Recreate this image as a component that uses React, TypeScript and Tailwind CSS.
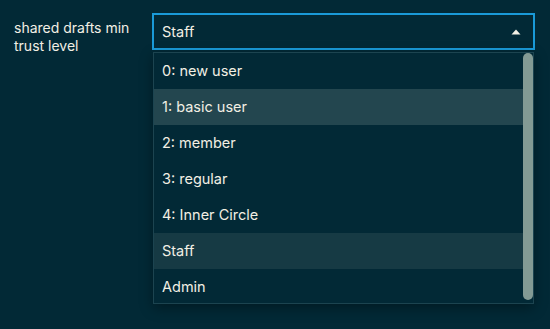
import React from "react";

const options = [
  "0: new user",
  "1: basic user",
  "2: member",
  "3: regular",
  "4: Inner Circle",
  "Staff",
  "Admin",
];

export default function App() {
  return (
    <div
      className="w-[550px] h-[329px] bg-[#022936] flex pt-[13px] pl-[14px] text-[#f2efe4]"
      style={{ fontFamily: 'Inter, "Liberation Sans", Arial, sans-serif' }}
    >
      <div className="w-[138px] text-[14px] leading-[18px] pt-[6px]">
        shared drafts min
        <br />
        trust level
      </div>
      <div className="w-[383px] flex flex-col">
        <div className="h-[37px] border-2 border-[#1a9ad8] flex items-center justify-between pl-[8px] pr-[12px] text-[14.5px]">
          <span>Staff</span>
          <svg width="10" height="6" viewBox="0 0 10 6">
            <path d="M5 0.5 L9.5 5.5 L0.5 5.5 Z" fill="#f2efe4" />
          </svg>
        </div>
        <div className="mx-[1px] mt-[2px] h-[252px] border border-[#1c4450] flex overflow-hidden shadow-[0_4px_12px_rgba(0,0,0,0.35)] bg-[#022936]">
          <div className="flex-1 flex flex-col">
            {options.map((o, i) => (
              <div
                key={o}
                className={
                  "h-[36px] shrink-0 flex items-center pl-[8px] text-[14.5px] " +
                  (i === 1 ? "bg-[#23464f]" : i === 5 ? "bg-[#163a44]" : "")
                }
              >
                {o}
              </div>
            ))}
          </div>
          <div className="w-[10px] pb-[3px]">
            <div className="w-[10px] h-full rounded-full bg-[#839a94]" />
          </div>
        </div>
      </div>
    </div>
  );
}
